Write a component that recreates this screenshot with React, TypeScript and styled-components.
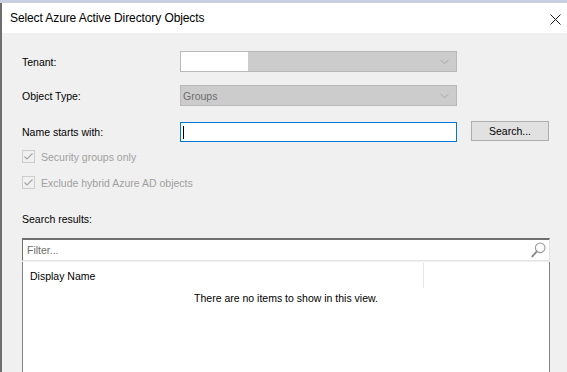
import styled, { createGlobalStyle } from "styled-components";

const GlobalStyle = createGlobalStyle`
  html, body {
    margin: 0;
    padding: 0;
    height: 100%;
    overflow: hidden;
    background: #f0f0f0;
  }
  #root {
    height: 100%;
  }
`;

const uiFont = `"Liberation Sans", Arial, sans-serif`;

export default function App() {
  return (
    <>
      <GlobalStyle />
      <Screen>
        <TopStrip />
        <Window>
          <TitleBar>
            <Title>Select Azure Active Directory Objects</Title>
            <CloseButton aria-label="Close">
              <svg width="11" height="11" viewBox="0 0 11 11">
                <path d="M0.5 0.5 L10.5 10.5 M10.5 0.5 L0.5 10.5" stroke="#1a1a1a" strokeWidth="1" />
              </svg>
            </CloseButton>
          </TitleBar>
          <Body>
            <FormRow top={18}>
              <Label>Tenant:</Label>
              <Combo>
                <ComboValueBox />
                <Chevron />
              </Combo>
            </FormRow>
            <FormRow top={13}>
              <Label>Object Type:</Label>
              <Combo>
                <ComboText>Groups</ComboText>
                <Chevron />
              </Combo>
            </FormRow>
            <FormRow top={15}>
              <Label>Name starts with:</Label>
              <TextInput>
                <Caret />
              </TextInput>
              <Button>Search...</Button>
            </FormRow>
            <CheckRow top={8}>
              <CheckBox>
                <CheckMark />
              </CheckBox>
              <CheckLabel>Security groups only</CheckLabel>
            </CheckRow>
            <CheckRow top={13}>
              <CheckBox>
                <CheckMark />
              </CheckBox>
              <CheckLabel>Exclude hybrid Azure AD objects</CheckLabel>
            </CheckRow>
            <SectionLabel>Search results:</SectionLabel>
            <FilterBox>
              <FilterText>Filter...</FilterText>
              <SearchIcon />
            </FilterBox>
            <ListView>
              <ListHeader>
                <HeaderCell>Display Name</HeaderCell>
                <HeaderRest />
              </ListHeader>
              <EmptyText>There are no items to show in this view.</EmptyText>
            </ListView>
          </Body>
        </Window>
      </Screen>
    </>
  );
}

function Chevron() {
  return (
    <ChevronSvg width="9" height="6" viewBox="0 0 9 6">
      <path d="M0.5 0.8 L4.5 4.8 L8.5 0.8" fill="none" stroke="#a9a9a9" strokeWidth="1" />
    </ChevronSvg>
  );
}

function CheckMark() {
  return (
    <svg width="11" height="11" viewBox="0 0 11 11">
      <path d="M1.5 5.5 L4 8 L9.5 2.5" fill="none" stroke="#a6a6a6" strokeWidth="1.2" />
    </svg>
  );
}

function SearchIcon() {
  return (
    <SearchSvg width="15" height="16" viewBox="0 0 15 16">
      <circle cx="9.2" cy="5.8" r="4.8" fill="#fbfbfb" stroke="#9a9a9a" strokeWidth="1.1" />
      <path d="M5.6 9.6 L1.3 14.4" stroke="#8c8c8c" strokeWidth="2" strokeLinecap="round" />
    </SearchSvg>
  );
}

const Screen = styled.div`
  display: flex;
  flex-direction: column;
  height: 100%;
  font-family: ${uiFont};
`;

const TopStrip = styled.div`
  height: 3px;
  background: #c6d0e1;
  flex: none;
`;

const Window = styled.div`
  flex: 1;
  display: flex;
  flex-direction: column;
  border-left: 2px solid #6e6e6e;
  min-height: 0;
`;

const TitleBar = styled.div`
  height: 30px;
  flex: none;
  display: flex;
  align-items: center;
  justify-content: space-between;
  background: #ffffff;
  padding: 0 6px 0 8px;
`;

const Title = styled.span`
  font-size: 12px;
  color: #000;
  letter-spacing: -0.1px;
`;

const CloseButton = styled.div`
  display: flex;
  width: 11px;
  height: 11px;
  margin-top: 2px;
`;

const Body = styled.div`
  flex: 1;
  display: flex;
  flex-direction: column;
  padding: 0 0 0 20px;
  background: #f0f0f0;
  min-height: 0;
`;

const FormRow = styled.div<{ top: number }>`
  display: flex;
  align-items: center;
  height: 21px;
  margin-top: ${(p) => p.top}px;
`;

const Label = styled.span`
  width: 158px;
  flex: none;
  font-size: 10.5px;
  color: #000;
`;

const Combo = styled.div`
  position: relative;
  width: 277px;
  height: 21px;
  box-sizing: border-box;
  display: flex;
  align-items: center;
  background: #cccccc;
  border: 1px solid #b9b9b9;
`;

const ComboValueBox = styled.div`
  width: 67px;
  height: 100%;
  background: #ffffff;
`;

const ComboText = styled.span`
  padding-left: 2px;
  font-size: 10.5px;
  color: #6d6d6d;
`;

const ChevronSvg = styled.svg`
  position: absolute;
  right: 7px;
  top: 7px;
`;

const TextInput = styled.div`
  width: 277px;
  height: 20px;
  box-sizing: border-box;
  margin-top: 1px;
  display: flex;
  align-items: center;
  background: #ffffff;
  border: 1px solid #0078d7;
  padding-left: 2px;
`;

const Caret = styled.div`
  width: 1px;
  height: 13px;
  background: #000;
`;

const Button = styled.div`
  width: 78px;
  height: 20px;
  box-sizing: border-box;
  margin-left: 14px;
  margin-top: -1px;
  display: flex;
  align-items: center;
  justify-content: center;
  background: #e1e1e1;
  border: 1px solid #adadad;
  font-size: 10.5px;
  color: #000;
`;

const CheckRow = styled.div<{ top: number }>`
  display: flex;
  align-items: center;
  height: 13px;
  margin-top: ${(p) => p.top}px;
`;

const CheckBox = styled.div`
  width: 13px;
  height: 13px;
  box-sizing: border-box;
  display: flex;
  align-items: center;
  justify-content: center;
  border: 1px solid #cccccc;
  background: #f0f0f0;
`;

const CheckLabel = styled.span`
  margin-left: 6px;
  font-size: 10.5px;
  color: #a0a0a0;
`;

const SectionLabel = styled.div`
  margin-top: 23px;
  height: 14px;
  line-height: 14px;
  font-size: 10.5px;
  color: #000;
`;

const FilterBox = styled.div`
  position: relative;
  margin-top: 12px;
  width: 528px;
  height: 23px;
  box-sizing: border-box;
  display: flex;
  align-items: center;
  background: #ffffff;
  border-top: 2px solid #6e6e6e;
  border-left: 1px solid #6e6e6e;
  border-right: 1px solid #e3e3e3;
  border-bottom: 1px solid #e3e3e3;
  padding-left: 4px;
`;

const FilterText = styled.span`
  font-size: 10.5px;
  color: #6d6d6d;
`;

const SearchSvg = styled.svg`
  position: absolute;
  right: 3px;
  top: 2px;
`;

const ListView = styled.div`
  flex: 1;
  width: 528px;
  box-sizing: border-box;
  margin-top: 1px;
  background: #ffffff;
  border-left: 1px solid #828282;
  border-right: 1px solid #828282;
  display: flex;
  flex-direction: column;
`;

const ListHeader = styled.div`
  display: flex;
  height: 25px;
  padding-top: 1px;
`;

const HeaderCell = styled.div`
  width: 401px;
  box-sizing: border-box;
  padding-left: 7px;
  display: flex;
  align-items: center;
  border-right: 1px solid #e5e5e5;
  font-size: 10.5px;
  color: #000;
`;

const HeaderRest = styled.div`
  flex: 1;
`;

const EmptyText = styled.div`
  margin-top: 4px;
  text-align: center;
  font-size: 10.5px;
  color: #000;
`;
